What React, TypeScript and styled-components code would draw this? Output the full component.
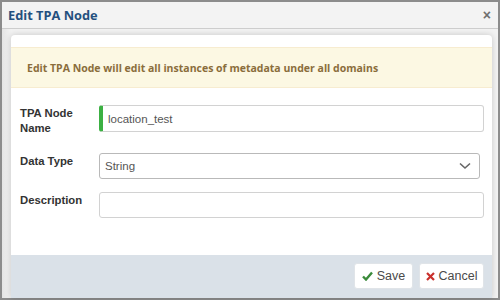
import React from 'react';
import styled, { createGlobalStyle } from 'styled-components';

const GlobalStyle = createGlobalStyle`
  html, body {
    margin: 0;
    padding: 0;
    background: #fff;
  }
  * {
    box-sizing: border-box;
  }
`;

const Dialog = styled.div`
  width: 500px;
  height: 300px;
  border: 2px solid #8c8c8c;
  background: #ececec;
  display: flex;
  flex-direction: column;
  font-family: 'Liberation Sans', Arial, sans-serif;
`;

const TitleBar = styled.div`
  height: 27px;
  flex: none;
  background: #f3f3f3;
  border-bottom: 1px solid #cdcdcd;
  display: flex;
  align-items: center;
  justify-content: space-between;
  padding: 0 7px 0 6px;
`;

const Title = styled.span`
  font-family: 'Open Sans', sans-serif;
  font-weight: 700;
  font-size: 12.8px;
  color: #24507e;
`;

const Close = styled.span`
  font-size: 14px;
  font-weight: 700;
  color: #6f6f6f;
  line-height: 1;
`;

const Body = styled.div`
  flex: 1;
  display: flex;
  padding: 6px 6px 0 9px;
  background: linear-gradient(to right, #e4e4e4, #f2f2f2 9px);
`;

const Panel = styled.div`
  flex: 1;
  display: flex;
  flex-direction: column;
  background: #fff;
  border-radius: 4px 4px 0 0;
  box-shadow: 0 0 6px rgba(0, 0, 0, 0.18);
`;

const Alert = styled.div`
  margin-top: 12px;
  height: 41px;
  display: flex;
  align-items: center;
  padding-left: 16px;
  background: #fcf8e3;
  border-top: 1px solid #f7ecd0;
  border-bottom: 1px solid #f7ecd0;
  font-family: 'Open Sans', sans-serif;
  font-weight: 700;
  font-size: 10.5px;
  color: #8a6d3b;
`;

const Form = styled.div`
  flex: 1;
  display: flex;
  flex-direction: column;
  gap: 13px;
  padding: 17px 8px 0 9px;
`;

const Row = styled.div`
  display: flex;
  align-items: flex-start;
`;

const Label = styled.label`
  width: 79px;
  flex: none;
  padding: 1px 0 4px;
  font-weight: 700;
  font-size: 11.3px;
  line-height: 15px;
  color: #333;
`;

const Field = styled.div<{ $valid?: boolean; $select?: boolean }>`
  flex: 1;
  height: ${(p) => (p.$valid ? 27 : 26)}px;
  margin-right: ${(p) => (p.$select ? 4 : 0)}px;
  display: flex;
  align-items: center;
  justify-content: space-between;
  padding: 0 8px 0 5px;
  border: 1px solid ${(p) => (p.$select ? '#b9b9b9' : '#d2d2d2')};
  border-left: ${(p) => (p.$valid ? '4px solid #3cb043' : `1px solid ${p.$select ? '#b9b9b9' : '#d2d2d2'}`)};
  border-radius: 3px;
  font-size: 11.5px;
  color: #555;
`;

const Footer = styled.div`
  height: 43px;
  flex: none;
  background: #dae1e8;
  display: flex;
  align-items: center;
  justify-content: flex-end;
  gap: 6px;
  padding: 0 8px 1px 0;
`;

const Button = styled.button<{ $w: number }>`
  width: ${(p) => p.$w}px;
  height: 26px;
  display: flex;
  align-items: center;
  justify-content: center;
  gap: 4px;
  background: #fff;
  border: 1px solid #e0e4e8;
  border-radius: 3px;
  font-family: 'Liberation Sans', Arial, sans-serif;
  font-size: 12.5px;
  color: #4a4a4a;
  padding: 0;
`;

const Chevron = () => (
  <svg width="12" height="8" viewBox="0 0 12 8">
    <path d="M1 1.5 L6 6 L11 1.5" fill="none" stroke="#666" strokeWidth="1.6" />
  </svg>
);

const Check = () => (
  <svg width="11" height="10" viewBox="0 0 11 10">
    <path d="M1 5.5 L4 8.5 L10 1.5" fill="none" stroke="#3a8a3a" strokeWidth="2.4" />
  </svg>
);

const Cross = () => (
  <svg width="9" height="9" viewBox="0 0 9 9">
    <path d="M1 1 L8 8 M8 1 L1 8" fill="none" stroke="#c9302c" strokeWidth="2.2" />
  </svg>
);

export default function App() {
  return (
    <>
      <GlobalStyle />
      <Dialog>
        <TitleBar>
          <Title>Edit TPA Node</Title>
          <Close>×</Close>
        </TitleBar>
        <Body>
          <Panel>
            <Alert>Edit TPA Node will edit all instances of metadata under all domains</Alert>
            <Form>
              <Row>
                <Label>
                  TPA Node
                  <br />
                  Name
                </Label>
                <Field $valid>location_test</Field>
              </Row>
              <Row>
                <Label>Data Type</Label>
                <Field $select>
                  String
                  <Chevron />
                </Field>
              </Row>
              <Row>
                <Label>Description</Label>
                <Field />
              </Row>
            </Form>
            <Footer>
              <Button $w={59}>
                <Check />
                Save
              </Button>
              <Button $w={65}>
                <Cross />
                Cancel
              </Button>
            </Footer>
          </Panel>
        </Body>
      </Dialog>
    </>
  );
}
